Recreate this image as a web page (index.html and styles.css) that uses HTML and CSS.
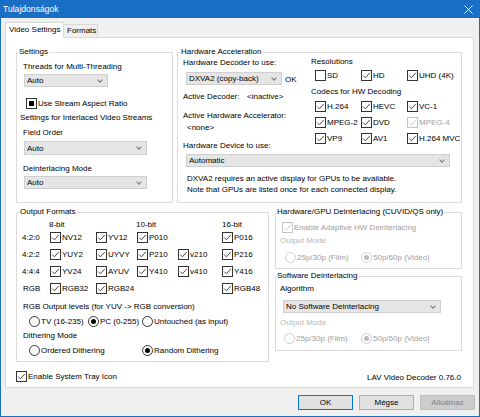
FILE: index.html
```html
<!DOCTYPE html>
<html lang="hu">
<head>
  <meta charset="UTF-8">
  <title>Tulajdonságok</title>
  <link rel="stylesheet" href="styles.css">
</head>
<body>

<svg class="sprite" width="0" height="0">
  <symbol id="tick" viewBox="0 0 9 9"><path d="M1.2 4.6L3.4 6.8L7.8 1.9"/></symbol>
</svg>

<div class="window">
  <div class="titlebar">
    <span class="title">Tulajdonságok</span>
    <svg class="close" width="9" height="9" viewBox="0 0 9 9"><path d="M0.5 0.5L8.5 8.5M8.5 0.5L0.5 8.5"/></svg>
  </div>

  <div class="dialog">
    <!-- Tabs -->
    <div class="tabs">
      <div class="tab active">Video Settings</div>
      <div class="tab">Formats</div>
    </div>

    <div class="panel">
      <div class="row-top">

        <fieldset class="group g-settings">
          <legend>Settings</legend>
          <div class="txt threads">Threads for Multi-Threading</div>
          <div class="combo combo-threads">Auto</div>
          <div class="cb aspect"><i class="box mixed"></i>Use Stream Aspect Ratio</div>
          <div class="txt interlaced">Settings for Interlaced Video Streams</div>
          <div class="txt field-order">Field Order</div>
          <div class="combo combo-field">Auto</div>
          <div class="txt deint-mode">Deinterlacing Mode</div>
          <div class="combo combo-deint">Auto</div>
        </fieldset>

        <fieldset class="group g-hwaccel">
          <legend>Hardware Acceleration</legend>
          <div class="hw-top">
            <div class="hw-left">
              <div class="txt hw-decoder">Hardware Decoder to use:</div>
              <div class="decoder-row">
                <div class="combo combo-decoder">DXVA2 (copy-back)</div>
                <span>OK</span>
              </div>
              <div class="kv"><span class="k">Active Decoder:</span><span>&lt;inactive&gt;</span></div>
              <div class="txt hw-accel">Active Hardware Accelerator:</div>
              <div class="txt hw-none">&lt;none&gt;</div>
              <div class="txt hw-device">Hardware Device to use:</div>
            </div>
            <div class="hw-right">
              <div class="txt">Resolutions</div>
              <div class="cb-grid res">
                <div class="cb"><i class="box"></i>SD</div>
                <div class="cb"><i class="box"><svg><use href="#tick"/></svg></i>HD</div>
                <div class="cb"><i class="box"><svg><use href="#tick"/></svg></i>UHD (4K)</div>
              </div>
              <div class="txt codecs-title">Codecs for HW Decoding</div>
              <div class="cb-grid codecs">
                <div class="cb"><i class="box"><svg><use href="#tick"/></svg></i>H.264</div>
                <div class="cb"><i class="box"><svg><use href="#tick"/></svg></i>HEVC</div>
                <div class="cb"><i class="box"><svg><use href="#tick"/></svg></i>VC-1</div>
                <div class="cb"><i class="box"><svg><use href="#tick"/></svg></i>MPEG-2</div>
                <div class="cb"><i class="box"><svg><use href="#tick"/></svg></i>DVD</div>
                <div class="cb dis"><i class="box"><svg><use href="#tick"/></svg></i>MPEG-4</div>
                <div class="cb"><i class="box"><svg><use href="#tick"/></svg></i>VP9</div>
                <div class="cb"><i class="box"><svg><use href="#tick"/></svg></i>AV1</div>
                <div class="cb"><i class="box"><svg><use href="#tick"/></svg></i>H.264 MVC</div>
              </div>
            </div>
          </div>
          <div class="combo combo-device">Automatic</div>
          <div class="note">DXVA2 requires an active display for GPUs to be available.<br>Note that GPUs are listed once for each connected display.</div>
        </fieldset>
      </div>

      <div class="row-bottom">

        <fieldset class="group g-formats">
          <legend>Output Formats</legend>
          <div class="fmt-head">
            <span></span><span>8-bit</span><span></span><span>10-bit</span><span></span><span>16-bit</span>
          </div>
          <div class="fmt-grid">
            <span class="fmt-name">4:2:0</span>
            <div class="cb"><i class="box"><svg><use href="#tick"/></svg></i>NV12</div>
            <div class="cb"><i class="box"><svg><use href="#tick"/></svg></i>YV12</div>
            <div class="cb"><i class="box"><svg><use href="#tick"/></svg></i>P010</div>
            <span></span>
            <div class="cb"><i class="box"><svg><use href="#tick"/></svg></i>P016</div>

            <span class="fmt-name">4:2:2</span>
            <div class="cb"><i class="box"><svg><use href="#tick"/></svg></i>YUY2</div>
            <div class="cb"><i class="box"><svg><use href="#tick"/></svg></i>UYVY</div>
            <div class="cb"><i class="box"><svg><use href="#tick"/></svg></i>P210</div>
            <div class="cb"><i class="box"><svg><use href="#tick"/></svg></i>v210</div>
            <div class="cb"><i class="box"><svg><use href="#tick"/></svg></i>P216</div>

            <span class="fmt-name">4:4:4</span>
            <div class="cb"><i class="box"><svg><use href="#tick"/></svg></i>YV24</div>
            <div class="cb"><i class="box"><svg><use href="#tick"/></svg></i>AYUV</div>
            <div class="cb"><i class="box"><svg><use href="#tick"/></svg></i>Y410</div>
            <div class="cb"><i class="box"><svg><use href="#tick"/></svg></i>v410</div>
            <div class="cb"><i class="box"><svg><use href="#tick"/></svg></i>Y416</div>

            <span class="fmt-name rgb">RGB</span>
            <div class="cb"><i class="box"><svg><use href="#tick"/></svg></i>RGB32</div>
            <div class="cb"><i class="box"><svg><use href="#tick"/></svg></i>RGB24</div>
            <span></span>
            <span></span>
            <div class="cb"><i class="box"><svg><use href="#tick"/></svg></i>RGB48</div>
          </div>
          <div class="txt levels">RGB Output levels (for YUV -&gt; RGB conversion)</div>
          <div class="radios levels-row">
            <div class="rb"><i class="dot"></i>TV (16-235)</div>
            <div class="rb"><i class="dot on"></i>PC (0-255)</div>
            <div class="rb"><i class="dot"></i>Untouched (as input)</div>
          </div>
          <div class="txt dither">Dithering Mode</div>
          <div class="radios dither-row">
            <div class="rb"><i class="dot"></i>Ordered Dithering</div>
            <div class="rb"><i class="dot on"></i>Random Dithering</div>
          </div>
        </fieldset>

        <div class="right-stack">
          <fieldset class="group g-hwdeint">
            <legend>Hardware/GPU Deinterlacing (CUVID/QS only)</legend>
            <div class="cb dis adaptive"><i class="box"><svg><use href="#tick"/></svg></i>Enable Adaptive HW Deinterlacing</div>
            <div class="txt out-mode">Output Mode</div>
            <div class="radios mode-row dis">
              <div class="rb"><i class="dot"></i>25p/30p (Film)</div>
              <div class="rb"><i class="dot on"></i>50p/60p (Video)</div>
            </div>
          </fieldset>

          <fieldset class="group g-swdeint">
            <legend>Software Deinterlacing</legend>
            <div class="txt algorithm">Algorithm</div>
            <div class="combo combo-algo">No Software Deinterlacing</div>
            <div class="txt out-mode sw">Output Mode</div>
            <div class="radios mode-row sw dis">
              <div class="rb"><i class="dot"></i>25p/30p (Film)</div>
              <div class="rb"><i class="dot on"></i>50p/60p (Video)</div>
            </div>
          </fieldset>
        </div>
      </div>

      <div class="footer-row">
        <div class="cb tray"><i class="box"><svg><use href="#tick"/></svg></i>Enable System Tray Icon</div>
        <div class="version">LAV Video Decoder 0.76.0</div>
      </div>
    </div>

    <div class="buttons">
      <div class="btn default">OK</div>
      <div class="btn">Mégse</div>
      <div class="btn disabled">Alkalmaz</div>
    </div>
  </div>
</div>

</body>
</html>
```

FILE: styles.css
```css
:root {
  --accent: #1a6fc4;
  --face: #f0f0f0;
  --line: #d9d9d9;
  --group: #dcdcdc;
  --ink: #000;
  --ink-box: #333;
  --muted: #a0a0a0;
  --muted-box: #c4c4c4;
  --font: 'Liberation Sans', Arial, sans-serif;
}

* {
  box-sizing: border-box;
}

body {
  margin: 0;
  font-family: var(--font);
  font-size: 8px;
  line-height: 10px;
  color: var(--ink);
  background: var(--face);
}

.sprite {
  position: absolute;
  width: 0;
  height: 0;
  overflow: hidden;
}

.window {
  width: 480px;
  height: 417px;
  border: 1px solid var(--accent);
  border-top: 0;
  background: var(--face);
  display: flex;
  flex-direction: column;
  overflow: hidden;
}

.titlebar {
  height: 18px;
  margin: 0 -1px;
  padding: 0 7px 0 3px;
  background: var(--accent);
  color: #fff;
  display: flex;
  align-items: center;
  justify-content: space-between;
  font-size: 8.6px;
}
.close path {
  stroke: #fff;
  stroke-width: 1;
}

.dialog {
  padding: 4px 0 0 4px;
}

/* tabs */
.tabs {
  display: flex;
  align-items: flex-end;
  height: 15px;
}
.tab {
  width: 34px;
  height: 13px;
  padding-left: 3px;
  border: 1px solid var(--line);
  border-left: 0;
  border-bottom: 0;
  line-height: 12px;
  white-space: nowrap;
}
.tab.active {
  width: 59px;
  height: 16px;
  margin-bottom: -1px;
  border-left: 1px solid var(--line);
  background: #fff;
  line-height: 14px;
  position: relative;
  z-index: 1;
}

.panel {
  width: 469px;
  height: 351px;
  border: 1px solid var(--line);
  background: #fff;
  padding: 9px 11px 0 10px;
}

/* group boxes */
.group {
  margin: 0;
  padding: 0;
  min-width: 0;
  border: 1px solid var(--group);
}
.group legend {
  padding: 0 1px;
  margin-left: 2px;
  line-height: 10px;
  white-space: nowrap;
}
.g-settings legend {
  margin-left: 1px;
}
.g-hwdeint legend,
.g-swdeint legend {
  margin-left: 0;
}

.txt {
  white-space: nowrap;
}

/* combo boxes */
.combo {
  height: 13px;
  padding: 0 5px 0 2px;
  background: #e5e5e5;
  border: 1px solid #cfcfcf;
  display: flex;
  align-items: center;
  justify-content: space-between;
  white-space: nowrap;
  line-height: 11px;
}
.combo::after {
  content: '';
  width: 3px;
  height: 3px;
  margin-top: -2px;
  border: solid #777;
  border-width: 0 1px 1px 0;
  transform: rotate(45deg);
}

/* check boxes */
.cb {
  display: flex;
  align-items: center;
  gap: 1px;
  height: 11px;
  white-space: nowrap;
}
.box {
  width: 11px;
  height: 11px;
  flex: none;
  border: 1px solid var(--ink-box);
  background: #fff;
  display: flex;
  align-items: center;
  justify-content: center;
}
.box svg {
  width: 9px;
  height: 9px;
  fill: none;
  stroke: var(--ink-box);
  stroke-width: 0.9;
}
.box.mixed::after {
  content: '';
  width: 5px;
  height: 5px;
  background: #000;
}
.cb.dis,
.dis .cb {
  color: var(--muted);
}
.cb.dis .box {
  border-color: var(--muted-box);
}
.cb.dis .box svg {
  stroke: var(--muted-box);
}

/* radio buttons */
.radios {
  display: grid;
  height: 11px;
}
.rb {
  display: flex;
  align-items: center;
  gap: 1px;
  white-space: nowrap;
}
.dot {
  width: 11px;
  height: 11px;
  flex: none;
  border: 1px solid var(--ink-box);
  border-radius: 50%;
  background: #fff;
  display: flex;
  align-items: center;
  justify-content: center;
}
.dot.on::after {
  content: '';
  width: 5px;
  height: 5px;
  border-radius: 50%;
  background: #000;
}
.radios.dis {
  color: var(--muted);
}
.radios.dis .dot {
  border-color: #cfcfcf;
}
.radios.dis .dot.on::after {
  background: #bcbcbc;
}

/* top row */
.row-top {
  display: grid;
  grid-template-columns: 157px 285px;
  column-gap: 4px;
}
.g-settings,
.g-hwaccel {
  height: 156px;
}

.threads {
  margin-top: 5px;
  padding-left: 6px;
}
.combo-threads {
  width: 84px;
  margin: 2px 0 0 7px;
}
.aspect {
  margin: 11px 0 0 9px;
}
.interlaced {
  margin-top: 4px;
  padding-left: 3px;
}
.field-order {
  margin-top: 5px;
  padding-left: 6px;
}
.combo-field {
  width: 123px;
  height: 14px;
  margin: 3px 0 0 7px;
}
.deint-mode {
  margin-top: 9px;
  padding-left: 6px;
}
.combo-deint {
  width: 123px;
  margin: 2px 0 0 7px;
}

.hw-top {
  display: grid;
  grid-template-columns: 133px 1fr;
}
.hw-left {
  padding-left: 5px;
}
.hw-decoder {
  margin-top: 1px;
}
.decoder-row {
  display: flex;
  align-items: center;
  gap: 3px;
  margin: 4px 0 0 3px;
}
.combo-decoder {
  width: 96px;
}
.decoder-row span {
  padding-top: 2px;
}
.kv {
  display: flex;
  margin-top: 7px;
  white-space: nowrap;
}
.kv .k {
  width: 64px;
}
.hw-accel {
  margin-top: 9px;
}
.hw-none {
  margin-top: 2px;
  padding-left: 4px;
}
.hw-device {
  margin-top: 8px;
}

.cb-grid {
  display: grid;
  grid-template-columns: 46px 46px 1fr;
  padding-left: 4px;
  row-gap: 5px;
}
.res {
  margin-top: 3px;
}
.codecs-title {
  margin-top: 6px;
}
.codecs {
  margin-top: 4px;
}

.combo-device {
  width: 264px;
  margin: 3px 0 0 8px;
}
.note {
  margin-top: 6px;
  padding-left: 9px;
  line-height: 11px;
  white-space: nowrap;
}

/* bottom row */
.row-bottom {
  display: grid;
  grid-template-columns: 253px 187px;
  column-gap: 6px;
  margin-top: 4px;
}
.g-formats {
  height: 155px;
}

.fmt-head,
.fmt-grid {
  display: grid;
  grid-template-columns: 33px 46px 41px 41px 44px 1fr;
}
.fmt-head {
  margin-top: 3px;
}
.fmt-head span:nth-child(2) {
  margin-left: -1px;
}
.fmt-head span:nth-child(4) {
  margin-left: -1px;
}
.fmt-grid {
  margin-top: 2px;
  row-gap: 6px;
  grid-auto-rows: 11px;
}
.fmt-name {
  padding-left: 5px;
  line-height: 11px;
}
.fmt-name.rgb {
  padding-left: 6px;
}

.levels {
  margin-top: 8px;
  padding-left: 6px;
}
.levels-row {
  grid-template-columns: 59px 54px 1fr;
  margin-top: 4px;
  padding-left: 12px;
}
.dither {
  margin-top: 4px;
  padding-left: 6px;
}
.dither-row {
  grid-template-columns: 113px 1fr;
  margin-top: 4px;
  padding-left: 12px;
}

.right-stack {
  display: flex;
  flex-direction: column;
  gap: 2px;
}
.g-hwdeint {
  height: 62px;
}
.g-swdeint {
  height: 80px;
}
.adaptive {
  margin: 5px 0 0 6px;
}
.out-mode {
  margin-top: 3px;
  padding-left: 4px;
  color: #b8b8b8;
}
.mode-row {
  grid-template-columns: 76px 1fr;
  margin-top: 6px;
  padding-left: 9px;
}
.algorithm {
  margin-top: 3px;
  padding-left: 4px;
}
.combo-algo {
  width: 158px;
  margin: 6px 0 0 7px;
}
.out-mode.sw {
  margin-top: 5px;
}
.mode-row.sw {
  grid-template-columns: 77px 1fr;
  margin-top: 5px;
  padding-left: 8px;
}

.footer-row {
  display: flex;
  justify-content: space-between;
  align-items: flex-start;
  margin-top: 9px;
  padding-right: 1px;
}
.version {
  margin-top: 2px;
}

/* dialog buttons */
.buttons {
  display: flex;
  justify-content: flex-end;
  gap: 6px;
  margin-top: 7px;
  padding-right: 4px;
}
.btn {
  width: 55px;
  height: 15px;
  border: 1px solid #adadad;
  background: #e1e1e1;
  text-align: center;
  line-height: 13px;
}
.btn.default {
  border-color: #0078d7;
}
.btn.disabled {
  border-color: #bfbfbf;
  background: #cccccc;
  color: #838383;
}
```
